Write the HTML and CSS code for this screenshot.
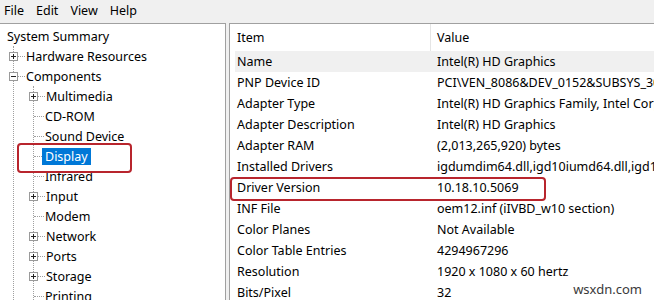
FILE: index.html
```html
<!DOCTYPE html>
<html lang="en">
<head>
    <meta charset="UTF-8">
    <title>System Information</title>
    <link rel="stylesheet" href="styles.css">
</head>
<body>
    <div class="menubar">
        <span class="menu-item">File</span>
        <span class="menu-item">Edit</span>
        <span class="menu-item">View</span>
        <span class="menu-item">Help</span>
    </div>

    <div class="main">
        <div class="tree">
            <div class="node root">System Summary</div>
            <div class="group level-1">
                <div class="node">
                    <svg class="exp" width="9" height="9"><rect x="0.5" y="0.5" width="8" height="8" fill="#fff" stroke="#9a9a9a"/><path d="M2 4.5h5M4.5 2v5" stroke="#222"/></svg>
                    <span class="link"></span><span class="label">Hardware Resources</span>
                </div>
                <div class="node">
                    <svg class="exp" width="9" height="9"><rect x="0.5" y="0.5" width="8" height="8" fill="#fff" stroke="#9a9a9a"/><path d="M2 4.5h5" stroke="#222"/></svg>
                    <span class="link"></span><span class="label">Components</span>
                </div>
                <div class="group level-2">
                    <div class="node">
                        <svg class="exp" width="9" height="9"><rect x="0.5" y="0.5" width="8" height="8" fill="#fff" stroke="#9a9a9a"/><path d="M2 4.5h5M4.5 2v5" stroke="#222"/></svg>
                        <span class="link"></span><span class="label">Multimedia</span>
                    </div>
                    <div class="node leaf"><span class="link"></span><span class="label">CD-ROM</span></div>
                    <div class="node leaf"><span class="link"></span><span class="label">Sound Device</span></div>
                    <div class="node leaf marked"><span class="link"></span><span class="label selected">Display</span></div>
                    <div class="node leaf"><span class="link"></span><span class="label">Infrared</span></div>
                    <div class="node">
                        <svg class="exp" width="9" height="9"><rect x="0.5" y="0.5" width="8" height="8" fill="#fff" stroke="#9a9a9a"/><path d="M2 4.5h5M4.5 2v5" stroke="#222"/></svg>
                        <span class="link"></span><span class="label">Input</span>
                    </div>
                    <div class="node leaf"><span class="link"></span><span class="label">Modem</span></div>
                    <div class="node">
                        <svg class="exp" width="9" height="9"><rect x="0.5" y="0.5" width="8" height="8" fill="#fff" stroke="#9a9a9a"/><path d="M2 4.5h5M4.5 2v5" stroke="#222"/></svg>
                        <span class="link"></span><span class="label">Network</span>
                    </div>
                    <div class="node">
                        <svg class="exp" width="9" height="9"><rect x="0.5" y="0.5" width="8" height="8" fill="#fff" stroke="#9a9a9a"/><path d="M2 4.5h5M4.5 2v5" stroke="#222"/></svg>
                        <span class="link"></span><span class="label">Ports</span>
                    </div>
                    <div class="node">
                        <svg class="exp" width="9" height="9"><rect x="0.5" y="0.5" width="8" height="8" fill="#fff" stroke="#9a9a9a"/><path d="M2 4.5h5M4.5 2v5" stroke="#222"/></svg>
                        <span class="link"></span><span class="label">Storage</span>
                    </div>
                    <div class="node leaf"><span class="link"></span><span class="label">Printing</span></div>
                </div>
            </div>
        </div>

        <div class="details">
            <div class="row header">
                <div class="cell">Item</div>
                <div class="cell">Value</div>
            </div>
            <div class="row current">
                <div class="cell">Name</div>
                <div class="cell">Intel(R) HD Graphics</div>
            </div>
            <div class="row">
                <div class="cell">PNP Device ID</div>
                <div class="cell">PCI\VEN_8086&amp;DEV_0152&amp;SUBSYS_30001028&amp;REV_09\3&amp;11583659&amp;0&amp;10</div>
            </div>
            <div class="row">
                <div class="cell">Adapter Type</div>
                <div class="cell">Intel(R) HD Graphics Family, Intel Corporation compatible</div>
            </div>
            <div class="row">
                <div class="cell">Adapter Description</div>
                <div class="cell">Intel(R) HD Graphics</div>
            </div>
            <div class="row">
                <div class="cell">Adapter RAM</div>
                <div class="cell">(2,013,265,920) bytes</div>
            </div>
            <div class="row">
                <div class="cell">Installed Drivers</div>
                <div class="cell">igdumdim64.dll,igd10iumd64.dll,igd10iumd64.dll,igdumdim32</div>
            </div>
            <div class="row marked">
                <div class="cell">Driver Version</div>
                <div class="cell">10.18.10.5069</div>
            </div>
            <div class="row">
                <div class="cell">INF File</div>
                <div class="cell">oem12.inf (iIVBD_w10 section)</div>
            </div>
            <div class="row">
                <div class="cell">Color Planes</div>
                <div class="cell">Not Available</div>
            </div>
            <div class="row">
                <div class="cell">Color Table Entries</div>
                <div class="cell">4294967296</div>
            </div>
            <div class="row">
                <div class="cell">Resolution</div>
                <div class="cell">1920 x 1080 x 60 hertz</div>
            </div>
            <div class="row">
                <div class="cell">Bits/Pixel</div>
                <div class="cell">32</div>
            </div>
        </div>
    </div>

    <div class="watermark">wsxdn.com</div>
</body>
</html>
```

FILE: styles.css
```css
:root {
    --bar-bg: #f0f0f0;
    --panel-border: #a0a0a0;
    --tree-line: #a0a0a0;
    --select-bg: #0078d7;
    --mark-color: #b8252d;
}

* {
    box-sizing: border-box;
    margin: 0;
    padding: 0;
}

body {
    width: 654px;
    height: 300px;
    overflow: hidden;
    background: var(--bar-bg);
    color: #000;
    font-family: 'Noto Sans', 'Open Sans', sans-serif;
    font-size: 12.5px;
    position: relative;
}

.menubar {
    display: flex;
    height: 23px;
    padding: 1px 0 0 4px;
    gap: 12px;
    line-height: 19px;
}

.main {
    display: flex;
    gap: 3px;
    height: 277px;
}

/* tree on the left */
.tree {
    width: 226px;
    background: #fff;
    border-top: 1px solid var(--panel-border);
    border-right: 1px solid var(--panel-border);
    padding-top: 2px;
    overflow: hidden;
}

.node {
    height: 20px;
    display: flex;
    align-items: center;
    white-space: nowrap;
}

.node.root {
    padding-left: 7px;
}

.group {
    position: relative;
}

.group::before {
    content: '';
    position: absolute;
    top: 0;
    bottom: 0;
    border-left: 1px dotted var(--tree-line);
}

.level-1::before {
    left: 13px;
}

.level-2::before {
    left: 33px;
}

.level-1 > .node {
    padding-left: 9px;
}

.level-2 > .node {
    padding-left: 29px;
}

.level-2 > .node.leaf {
    padding-left: 34px;
}

.exp {
    flex: none;
    position: relative;
    z-index: 1;
}

.link {
    width: 7px;
    height: 0;
    border-top: 1px dotted var(--tree-line);
    flex: none;
}

.leaf .link {
    width: 10px;
}

.label {
    padding: 0 1px;
    line-height: 17px;
}

.label.selected {
    background: var(--select-bg);
    color: #fff;
    margin-left: -2px;
    padding: 0 3px 0 3px;
}

.node.marked {
    position: relative;
}

.node.marked::after {
    content: '';
    position: absolute;
    left: 17px;
    top: -3px;
    width: 111px;
    height: 26px;
    border: 2px solid var(--mark-color);
    border-radius: 4px;
}

/* item / value list on the right */
.details {
    flex: 1;
    background: #fff;
    border-top: 1px solid var(--panel-border);
    border-left: 1px solid var(--panel-border);
    padding-left: 5px;
    overflow: hidden;
}

.row {
    display: grid;
    grid-template-columns: 196px 1fr;
    height: 21px;
    align-items: center;
    white-space: nowrap;
}

.row .cell {
    padding-left: 2px;
    overflow: hidden;
}

.row .cell + .cell {
    padding-left: 6px;
    overflow: visible;
}

.row.header {
    height: 27px;
    align-items: stretch;
}

.row.header .cell {
    display: flex;
    align-items: center;
}

.row.header .cell:first-child {
    border-right: 1px solid #e5e5e5;
}

.row.current {
    background: #f0f0f0;
}

.row.marked {
    position: relative;
}

.row.marked::after {
    content: '';
    position: absolute;
    left: -5px;
    top: 0;
    width: 312px;
    height: 20px;
    border: 2px solid var(--mark-color);
    border-radius: 4px;
}

.watermark {
    position: absolute;
    right: 12px;
    bottom: 2px;
    font-size: 13px;
    color: #3a3a3a;
    text-shadow: 0 0 2px #fff, 0 0 2px #fff;
}
```
